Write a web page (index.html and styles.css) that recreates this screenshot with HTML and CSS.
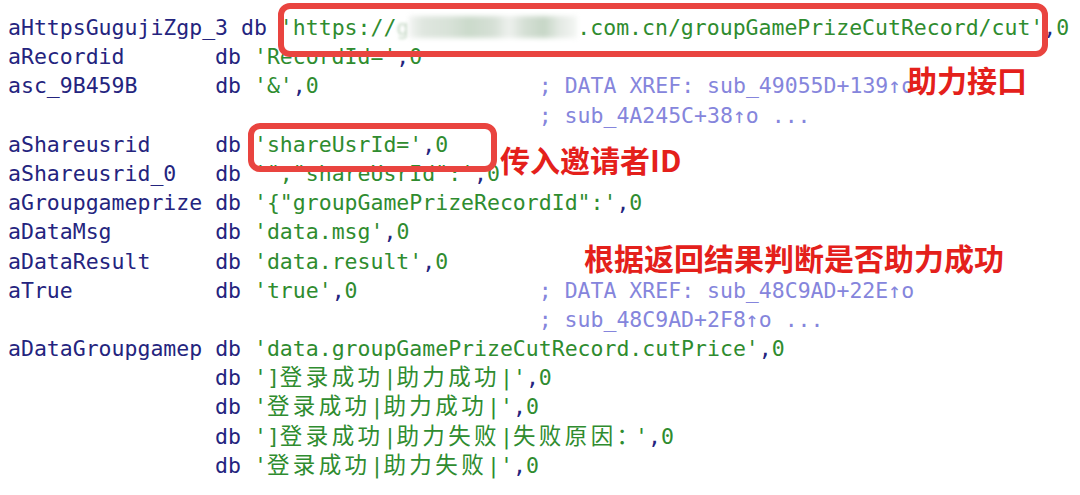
FILE: index.html
```html
<!DOCTYPE html>
<html>
<head>
<meta charset="utf-8">
<link rel="stylesheet" href="styles.css">
</head>
<body>
<div class="page">
  <div class="code">
    <div class="row"><span class="lbl">aHttpsGugujiZgp_3</span> <span class="kw">db</span> <span class="str">'https://<span class="ghost">g</span><span class="redact"></span>.com.cn/groupGamePrizeCutRecord/cut'</span><span class="kw">,</span><span class="str">0</span></div>
    <div class="row"><span class="lbl">aRecordid</span>       <span class="kw">db</span> <span class="str">'RecordId='</span><span class="kw">,</span><span class="str">0</span></div>
    <div class="row"><span class="lbl">asc_9B459B</span>      <span class="kw">db</span> <span class="str">'&amp;'</span><span class="kw">,</span><span class="str">0</span>                 <span class="cmt">; DATA XREF: sub_49055D+139↑o</span></div>
    <div class="row">                                         <span class="cmt">; sub_4A245C+38↑o ...</span></div>
    <div class="row"><span class="lbl">aShareusrid</span>     <span class="kw">db</span> <span class="str">'shareUsrId='</span><span class="kw">,</span><span class="str">0</span></div>
    <div class="row"><span class="lbl">aShareusrid_0</span>   <span class="kw">db</span> <span class="str">'","shareUsrId":'</span><span class="kw">,</span><span class="str">0</span></div>
    <div class="row"><span class="lbl">aGroupgameprize</span> <span class="kw">db</span> <span class="str">'{"groupGamePrizeRecordId":'</span><span class="kw">,</span><span class="str">0</span></div>
    <div class="row"><span class="lbl">aDataMsg</span>        <span class="kw">db</span> <span class="str">'data.msg'</span><span class="kw">,</span><span class="str">0</span></div>
    <div class="row"><span class="lbl">aDataResult</span>     <span class="kw">db</span> <span class="str">'data.result'</span><span class="kw">,</span><span class="str">0</span></div>
    <div class="row"><span class="lbl">aTrue</span>           <span class="kw">db</span> <span class="str">'true'</span><span class="kw">,</span><span class="str">0</span>              <span class="cmt">; DATA XREF: sub_48C9AD+22E↑o</span></div>
    <div class="row">                                         <span class="cmt">; sub_48C9AD+2F8↑o ...</span></div>
    <div class="row"><span class="lbl">aDataGroupgamep</span> <span class="kw">db</span> <span class="str">'data.groupGamePrizeCutRecord.cutPrice'</span><span class="kw">,</span><span class="str">0</span></div>
    <div class="row">                <span class="kw">db</span> <span class="str">']<span class="cjk">登录成功</span>|<span class="cjk">助力成功</span>|'</span><span class="kw">,</span><span class="str">0</span></div>
    <div class="row">                <span class="kw">db</span> <span class="str">'<span class="cjk">登录成功</span>|<span class="cjk">助力成功</span>|'</span><span class="kw">,</span><span class="str">0</span></div>
    <div class="row">                <span class="kw">db</span> <span class="str">']<span class="cjk">登录成功</span>|<span class="cjk">助力失败</span>|<span class="cjk">失败原因</span><span class="cjk-colon">：</span>'</span><span class="kw">,</span><span class="str">0</span></div>
    <div class="row">                <span class="kw">db</span> <span class="str">'<span class="cjk">登录成功</span>|<span class="cjk">助力失败</span>|'</span><span class="kw">,</span><span class="str">0</span></div>
  </div>
  <div class="box box-url"></div>
  <div class="box box-share"></div>
  <div class="note note-api">助力接口</div>
  <div class="note note-id">传入邀请者ID</div>
  <div class="note note-result">根据返回结果判断是否助力成功</div>
</div>
</body>
</html>
```

FILE: styles.css
```css
html, body {
  margin: 0;
  padding: 0;
  background: #ffffff;
}

.page {
  position: relative;
  width: 1080px;
  height: 495px;
  overflow: hidden;
  background: #ffffff;
}

.code {
  padding: 13px 0 0 8px;
  font-family: "DejaVu Sans Mono", "Liberation Mono", monospace;
  font-size: 21.5px;
  color: #25257a;
}

.row {
  white-space: pre;
  height: 29.2px;
  line-height: 29.2px;
}

.lbl, .kw {
  color: #24247e;
}

.str {
  color: #2f8c2f;
}

.cmt {
  color: #8585dc;
}

.cjk {
  font-family: "Noto Sans CJK SC", sans-serif;
  font-size: 22.5px;
  letter-spacing: 3.4px;
  line-height: 1;
}

.cjk-colon {
  font-family: "Noto Sans CJK SC", sans-serif;
  font-size: 22.5px;
  letter-spacing: -4px;
  line-height: 1;
}

.ghost {
  color: #c5d8c5;
  filter: blur(1.5px);
}

.redact {
  display: inline-block;
  width: 168px;
  height: 22px;
  vertical-align: -3px;
  background: linear-gradient(90deg,
    #f2f4f2 0px, #dfe6df 14px, #d8e2d8 40px, #cbdacb 60px, #d6e0d6 85px,
    #eef1ee 100px, #d6e0d6 115px, #c6d6c6 135px, #e3e9e3 150px, #f4f6f4 168px);
  filter: blur(2.5px);
}

.box {
  position: absolute;
  border: 6px solid #e9443f;
  border-radius: 12px;
  box-sizing: border-box;
}

.box-url {
  left: 278px;
  top: 3px;
  width: 770px;
  height: 54px;
}

.box-share {
  left: 248px;
  top: 123px;
  width: 249px;
  height: 49px;
}

.note {
  position: absolute;
  font-family: "Noto Sans CJK SC", sans-serif;
  font-weight: 700;
  font-size: 30px;
  line-height: 30px;
  color: #e4201b;
  white-space: nowrap;
}

.note-api {
  left: 907px;
  top: 64px;
}

.note-id {
  left: 500px;
  top: 144px;
}

.note-result {
  left: 584px;
  top: 242px;
}
```
